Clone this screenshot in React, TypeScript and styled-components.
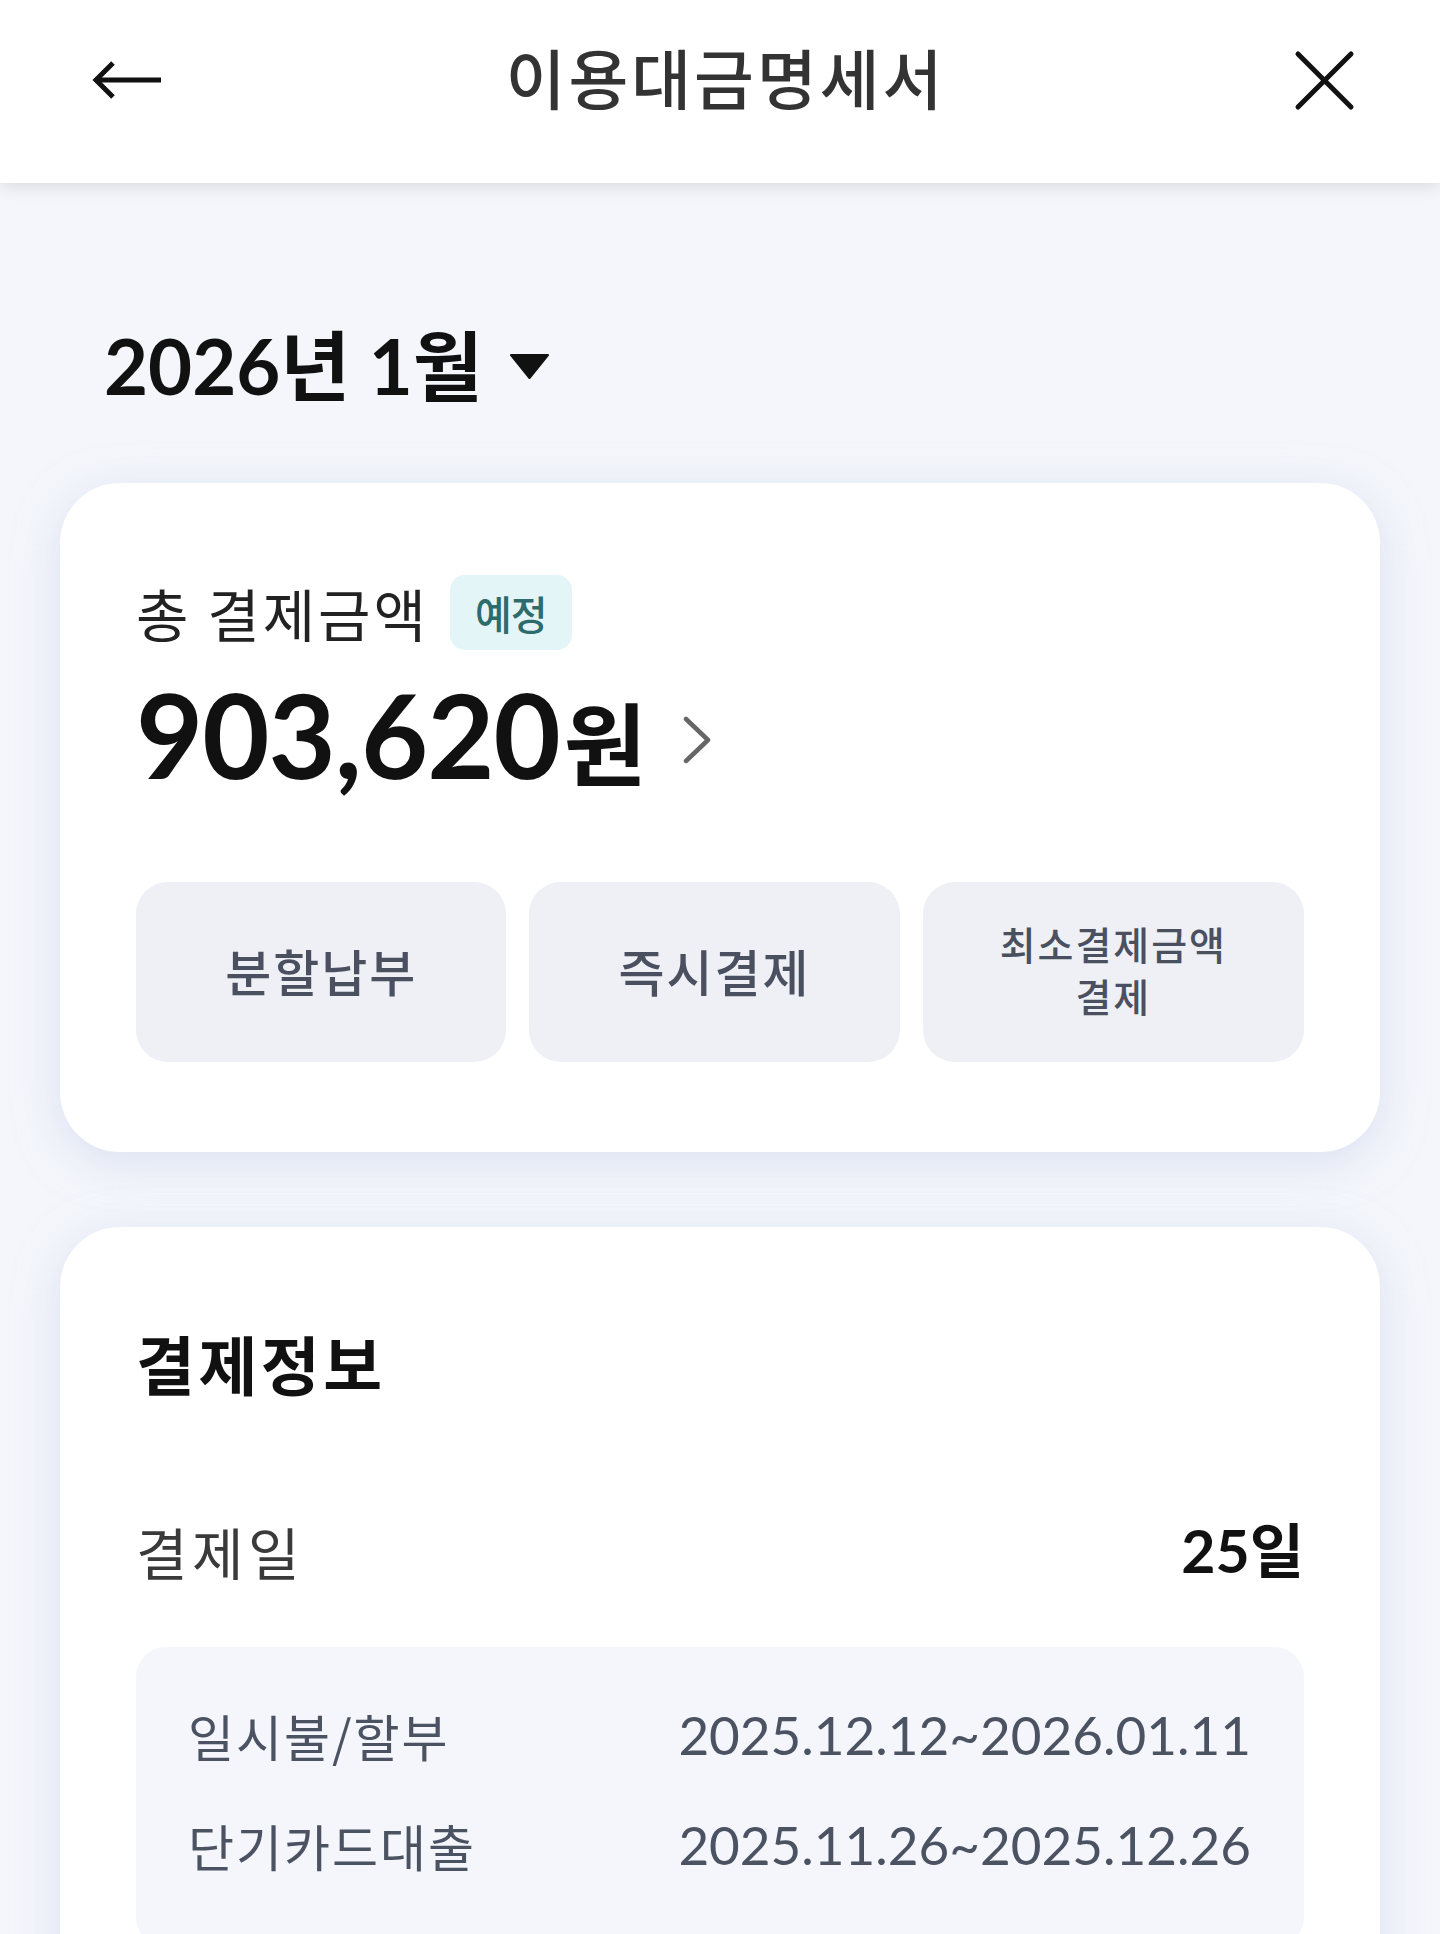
import React from "react";
import styled, { createGlobalStyle } from "styled-components";

const KR = `"Noto Sans CJK KR", "Noto Sans", sans-serif`;
const NUM = `Lato, "Noto Sans CJK KR", sans-serif`;

const GlobalStyle = createGlobalStyle`
  html, body { margin: 0; padding: 0; background: #f4f6fb; }
  body { font-family: ${KR}; color: #111; -webkit-font-smoothing: antialiased; }
  * { box-sizing: border-box; }
`;

const Page = styled.div`
  width: 1440px;
  min-height: 1934px;
  background: #f4f6fb;
`;

const Header = styled.header`
  position: relative;
  z-index: 2;
  height: 183px;
  background: #fff;
  box-shadow: 0 4px 16px rgba(0, 0, 0, 0.11);
  display: grid;
  grid-template-columns: 1fr auto 1fr;
  grid-template-rows: 100px;
  align-items: center;
  padding: 30px 83px 0 90px;
`;

const IconButton = styled.button<{ $end?: boolean }>`
  background: none;
  border: 0;
  padding: 0;
  margin: 0;
  display: flex;
  align-items: center;
  justify-self: ${(p) => (p.$end ? "end" : "start")};
  cursor: pointer;
`;

const Title = styled.h1`
  margin: 0 0 0 4px;
  align-self: start;
  font-family: ${KR};
  font-size: 65px;
  font-weight: 500;
  line-height: 92px;
  letter-spacing: 3px;
  color: #333;
`;

const Main = styled.main`
  padding: 138px 60px 0;
`;

const MonthSelector = styled.button`
  display: flex;
  align-items: center;
  gap: 27px;
  background: none;
  border: 0;
  padding: 0 0 0 44px;
  margin: 0 0 72px;
  height: 90px;
  font-family: ${NUM};
  font-size: 76px;
  font-weight: 700;
  line-height: 90px;
  letter-spacing: 0px;
  color: #111;
`;

const Card = styled.section<{ $gap?: number }>`
  background: #fff;
  border-radius: 60px;
  box-shadow: 0 10px 44px rgba(196, 208, 234, 0.55);
  margin-top: ${(p) => p.$gap ?? 0}px;
`;

const SummaryCard = styled(Card)`
  padding: 92px 76px 90px;
`;

const TitleRow = styled.div`
  display: flex;
  align-items: center;
  gap: 21px;
  height: 75px;
`;

const TotalLabel = styled.span`
  font-family: ${KR};
  font-size: 57px;
  font-weight: 400;
  line-height: 75px;
  letter-spacing: 3px;
  color: #222;
`;

const Badge = styled.span`
  display: inline-flex;
  align-items: center;
  justify-content: center;
  height: 75px;
  padding: 0 25px;
  border-radius: 15px;
  background: #e3f5f6;
  color: #2e6b6c;
  font-family: ${KR};
  font-size: 40px;
  font-weight: 500;
  letter-spacing: -1px;
`;

const AmountRow = styled.div`
  display: flex;
  align-items: center;
  margin-top: 17px;
  height: 140px;
`;

const Amount = styled.span`
  font-family: ${NUM};
  font-size: 116px;
  font-weight: 700;
  line-height: 140px;
  letter-spacing: -1px;
  color: #111;
`;

const Won = styled.span`
  font-family: ${KR};
  font-size: 90px;
  font-weight: 700;
  letter-spacing: 0;
  margin-left: 4px;
`;

const ChevronWrap = styled.span`
  display: flex;
  margin-left: 34px;
  margin-top: 6px;
`;

const ButtonGrid = styled.div`
  margin-top: 75px;
  display: grid;
  grid-template-columns: 1fr 1fr 1.03fr;
  gap: 23px;
`;

const ActionButton = styled.button<{ $small?: boolean }>`
  height: 180px;
  border: 0;
  border-radius: 32px;
  background: #eef0f5;
  color: #4b5060;
  font-family: ${KR};
  font-size: ${(p) => (p.$small ? 39 : 50)}px;
  line-height: ${(p) => (p.$small ? 52 : 64)}px;
  font-weight: 500;
  letter-spacing: 2px;
  text-align: center;
  padding: ${(p) => (p.$small ? "0 20px 6px" : "0 20px 4px")};
`;

const InfoCard = styled(Card)`
  padding: 93px 76px 80px;
`;

const SectionTitle = styled.h2`
  margin: 0;
  font-family: ${KR};
  font-size: 64px;
  font-weight: 700;
  line-height: 84px;
  letter-spacing: 3.5px;
  color: #111;
`;

const InfoRow = styled.div`
  margin-top: 111px;
  display: flex;
  justify-content: space-between;
  align-items: center;
  height: 72px;
`;

const InfoLabel = styled.span`
  font-family: ${KR};
  font-size: 56px;
  font-weight: 400;
  line-height: 72px;
  letter-spacing: 4.5px;
  color: #3a3a3a;
`;

const InfoValue = styled.span`
  font-family: ${NUM};
  font-size: 59px;
  font-weight: 700;
  line-height: 72px;
  letter-spacing: 0;
  color: #111;
`;

const PeriodBox = styled.div`
  margin-top: 60px;
  background: #f4f6fb;
  border-radius: 30px;
  padding: 56px 53px 70px 52px;
  display: flex;
  flex-direction: column;
  gap: 46px;
`;

const PeriodRow = styled.div`
  display: flex;
  justify-content: space-between;
  align-items: center;
  height: 64px;
`;

const PeriodLabel = styled.span`
  font-family: ${KR};
  font-size: 50px;
  font-weight: 400;
  line-height: 64px;
  letter-spacing: 2px;
  color: #4b5262;
`;

const PeriodValue = styled.span`
  font-family: ${NUM};
  font-size: 53px;
  font-weight: 400;
  line-height: 64px;
  letter-spacing: 0;
  color: #4b5262;
`;

const BackIcon = () => (
  <svg width="74" height="42" viewBox="0 0 74 42" fill="none">
    <path d="M5 21H71" stroke="#111" strokeWidth="5" />
    <path d="M23 4L6 21L23 38" stroke="#111" strokeWidth="5" strokeLinejoin="miter" />
  </svg>
);

const CloseIcon = () => (
  <svg width="64" height="62" viewBox="0 0 64 62" fill="none">
    <path d="M5 5L58 58M58 5L5 58" stroke="#111" strokeWidth="5" strokeLinecap="round" />
  </svg>
);

const Caret = () => (
  <svg width="39" height="25" viewBox="0 0 39 25">
    <path d="M1 1H38L19.5 24Z" fill="#111" stroke="#111" strokeWidth="2" strokeLinejoin="round" />
  </svg>
);

const Chevron = () => (
  <svg width="32" height="50" viewBox="0 0 32 50" fill="none">
    <path d="M5 4L27 25L5 46" stroke="#666" strokeWidth="4.5" strokeLinecap="round" strokeLinejoin="round" />
  </svg>
);

const periods = [
  { label: "일시불/할부", value: "2025.12.12~2026.01.11" },
  { label: "단기카드대출", value: "2025.11.26~2025.12.26" },
];

export default function App() {
  return (
    <Page>
      <GlobalStyle />
      <Header>
        <IconButton aria-label="뒤로">
          <BackIcon />
        </IconButton>
        <Title>이용대금명세서</Title>
        <IconButton $end aria-label="닫기">
          <CloseIcon />
        </IconButton>
      </Header>
      <Main>
        <MonthSelector>
          <span>2026년 1월</span>
          <Caret />
        </MonthSelector>

        <SummaryCard>
          <TitleRow>
            <TotalLabel>총 결제금액</TotalLabel>
            <Badge>예정</Badge>
          </TitleRow>
          <AmountRow>
            <Amount>
              903,620<Won>원</Won>
            </Amount>
            <ChevronWrap>
              <Chevron />
            </ChevronWrap>
          </AmountRow>
          <ButtonGrid>
            <ActionButton>분할납부</ActionButton>
            <ActionButton>즉시결제</ActionButton>
            <ActionButton $small>
              최소결제금액
              <br />
              결제
            </ActionButton>
          </ButtonGrid>
        </SummaryCard>

        <InfoCard $gap={75}>
          <SectionTitle>결제정보</SectionTitle>
          <InfoRow>
            <InfoLabel>결제일</InfoLabel>
            <InfoValue>25일</InfoValue>
          </InfoRow>
          <PeriodBox>
            {periods.map((p) => (
              <PeriodRow key={p.label}>
                <PeriodLabel>{p.label}</PeriodLabel>
                <PeriodValue>{p.value}</PeriodValue>
              </PeriodRow>
            ))}
          </PeriodBox>
        </InfoCard>
      </Main>
    </Page>
  );
}
